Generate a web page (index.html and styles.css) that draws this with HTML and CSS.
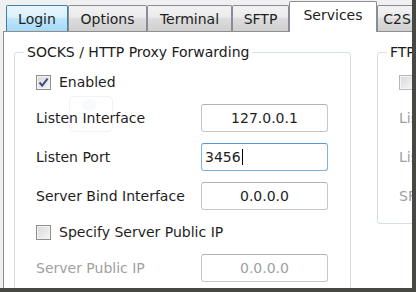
FILE: index.html
```html
<!DOCTYPE html>
<html lang="en">
<head>
<meta charset="UTF-8">
<meta name="viewport" content="width=device-width, initial-scale=1.0">
<title>Services</title>
<link rel="stylesheet" href="styles.css">
</head>
<body>
<div class="shot">
<div class="tabs">
<div class="tab tab-login hover">Login</div>
<div class="tab tab-options">Options</div>
<div class="tab tab-terminal">Terminal</div>
<div class="tab tab-sftp">SFTP</div>
<div class="tab tab-services active">Services</div>
<div class="tab tab-c2s">C2S</div>
</div>
<div class="panel">
<div class="ghost"><span class="ghost-dot"></span></div>
<fieldset class="group socks">
<legend>SOCKS / HTTP Proxy Forwarding</legend>
<div class="row check">
<span class="box checked"><svg width="11" height="11" viewBox="0 0 11 11"><path d="M1.5 5.5 L4.2 8.6 L9.6 1.6" fill="none" stroke="#3d4f86" stroke-width="2"/></svg></span>
<span>Enabled</span>
</div>
<div class="row">
<label>Listen Interface</label>
<div class="field center">127.0.0.1</div>
</div>
<div class="row">
<label>Listen Port</label>
<div class="field focus">3456<span class="caret"></span></div>
</div>
<div class="row">
<label>Server Bind Interface</label>
<div class="field center">0.0.0.0</div>
</div>
<div class="row check">
<span class="box"></span>
<span>Specify Server Public IP</span>
</div>
<div class="row off">
<label>Server Public IP</label>
<div class="field center">0.0.0.0</div>
</div>
</fieldset>
<fieldset class="group ftp">
<legend>FTP-to-SFTP Bridge</legend>
<div class="row check">
<span class="box"></span>
<span class="dim">Enabled</span>
</div>
<div class="row off">
<label>Listen Interface</label>
</div>
<div class="row off">
<label>Listen Port</label>
</div>
<div class="row off">
<label>SFTP Start Directory</label>
</div>
</fieldset>
</div>
</div>
</body>
</html>
```

FILE: styles.css
```css
body {
margin: 0;
padding: 0;
background: #f0f0f0;
font-family: 'DejaVu Sans', Verdana, sans-serif;
font-size: 14px;
color: #1e1e1e;
}
.shot {
width: 416px;
height: 292px;
box-sizing: border-box;
border-right: 4px solid #474743;
border-bottom: 4px solid #474743;
background: #f0f0f0;
overflow: hidden;
display: flex;
flex-direction: column;
}
.tabs {
height: 31px;
flex: none;
display: flex;
align-items: flex-end;
padding-left: 6px;
}
.tab {
height: 26px;
box-sizing: border-box;
border: 1px solid #898c95;
border-bottom: none;
border-radius: 2px 2px 0 0;
background: linear-gradient(#f2f2f2, #ebebeb 45%, #dddddd 50%, #cfcfcf);
display: flex;
align-items: center;
justify-content: center;
padding-top: 1px;
flex: none;
}
.tab.hover {
border-color: #3c7fb1;
background: linear-gradient(#eaf6fd, #d9f0fc 45%, #bee6fd 50%, #a7d9f5);
}
.tab.active {
height: 31px;
margin-bottom: -1px;
background: #fff;
position: relative;
z-index: 1;
padding-top: 0;
padding-bottom: 5px;
}
.tab-login { width: 62px; }
.tab-options { width: 79px; }
.tab-terminal { width: 85px; }
.tab-sftp { width: 57px; }
.tab-services { width: 88px; }
.tab-c2s { width: 40px; }
.panel {
flex: 1;
margin-left: 3px;
border-left: 1px solid #8e8f8f;
border-top: 1px solid #8e8f8f;
background: #fff;
display: flex;
align-items: flex-start;
gap: 26px;
padding: 12px 0 0 10px;
overflow: hidden;
position: relative;
}
.group {
margin: 0;
flex: none;
box-sizing: border-box;
border: 1px solid #d5dfe5;
border-radius: 3px;
padding: 0 0 13px 9px;
}
.group legend {
line-height: 16px;
padding: 0 3px;
color: #1a1a1a;
}
.socks {
width: 337px;
padding-bottom: 40px;
}
.ftp {
width: 120px;
}
.row {
height: 28px;
margin-top: 11px;
padding-left: 12px;
display: flex;
align-items: center;
white-space: nowrap;
}
.row:first-of-type {
margin-top: 11px;
}
.row.check {
height: 22px;
gap: 8px;
}
.row label {
width: 165px;
flex: none;
}
.off label, .off .field, .dim {
color: #a0a0a0;
}
.box {
width: 15px;
height: 15px;
box-sizing: border-box;
border: 1px solid #8f8f8f;
background: linear-gradient(135deg, #d8d8d8, #f6f6f6);
box-shadow: inset 0 0 0 1px #f4f4f4;
display: flex;
align-items: center;
justify-content: center;
flex: none;
}
.ftp .box {
border-color: #b8b8b8;
}
.field {
width: 127px;
height: 28px;
box-sizing: border-box;
border: 1px solid #c4c6ca;
border-top-color: #b0b3b8;
border-radius: 3px;
display: flex;
align-items: center;
flex: none;
}
.field.center {
justify-content: center;
}
.field.focus {
border-color: #7fb1e3;
border-top-color: #5b95d4;
padding-left: 3px;
}
.caret {
width: 1px;
height: 16px;
background: #000;
margin-left: 1px;
}
.ghost {
position: absolute;
left: 65px;
top: 64px;
width: 42px;
height: 34px;
border: 1px solid rgba(210, 222, 234, 0.35);
border-radius: 5px;
}
.ghost-dot {
position: absolute;
left: 12px;
top: 2px;
width: 14px;
height: 12px;
border-radius: 50%;
background: rgba(215, 226, 238, 0.18);
}
```
